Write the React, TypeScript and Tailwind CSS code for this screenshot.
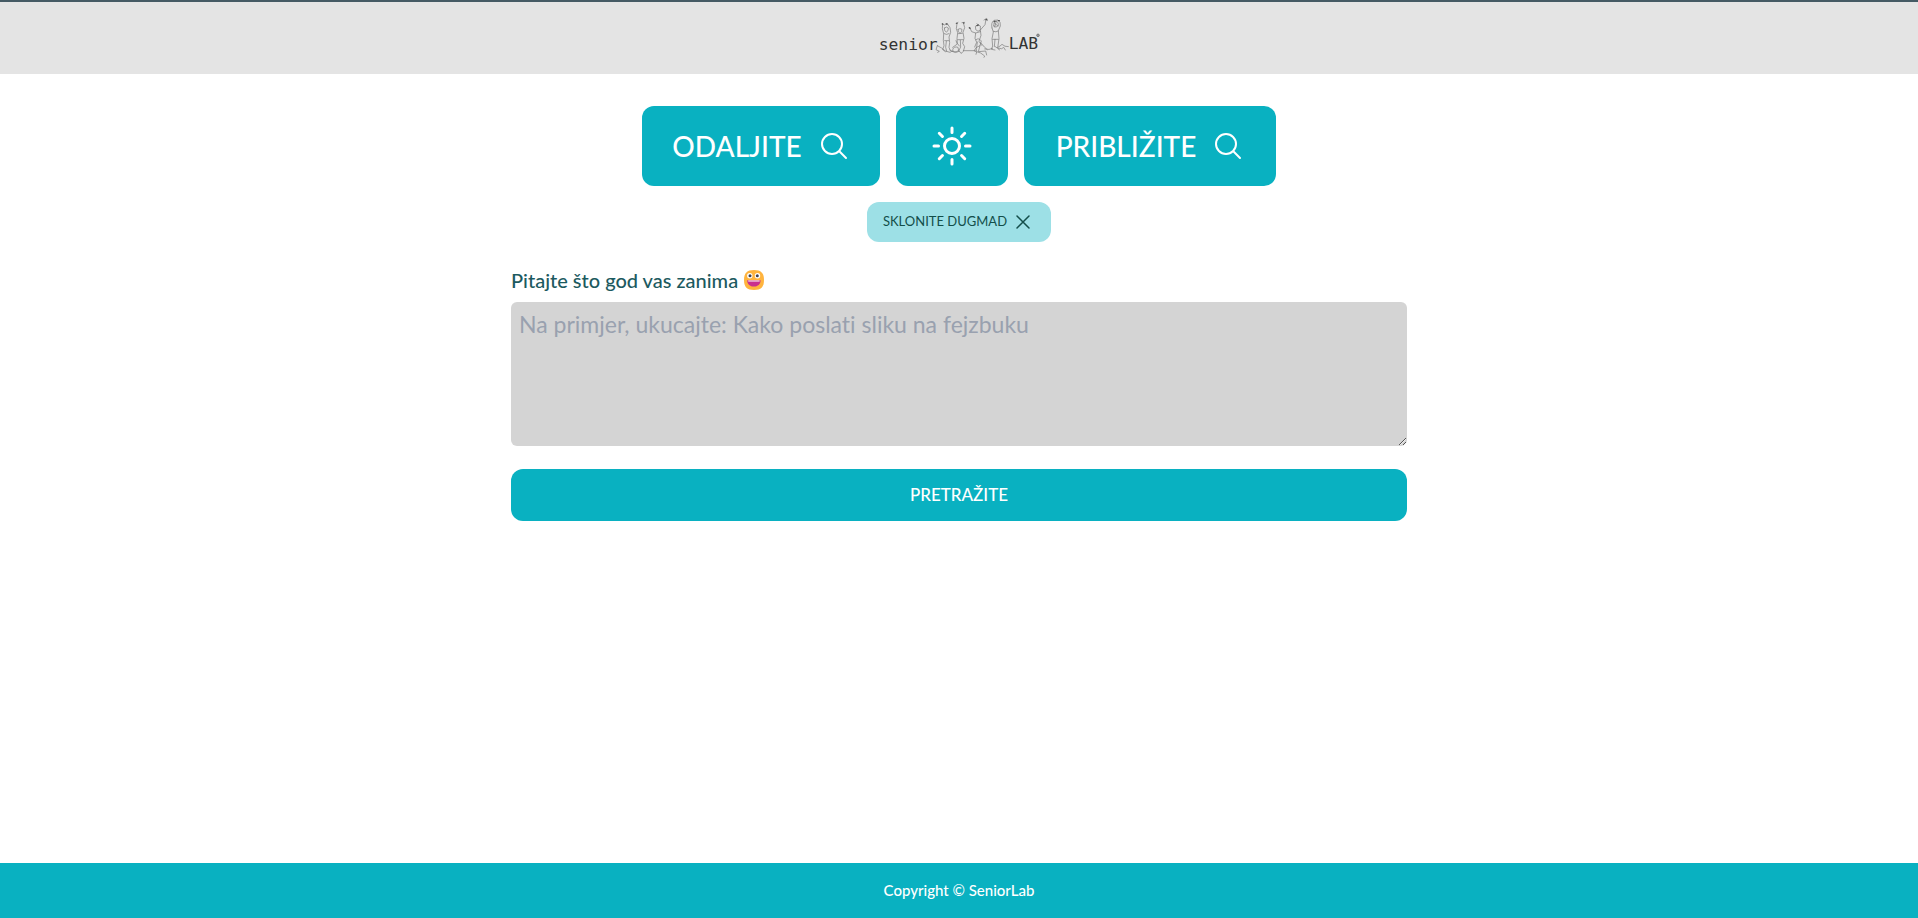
import type { ReactNode } from "react";
import {
  HiOutlineMagnifyingGlass,
  HiOutlineSun,
  HiOutlineXMark,
} from "react-icons/hi2";

function Logo() {
  return (
    <svg viewBox="21 45 492 138" className="h-[46px] w-[164px]" role="img" aria-label="seniorLAB">
      <g fill="#333333" fontFamily="'DejaVu Sans Mono', monospace" fontSize="49">
        <text x="26" y="149">senior</text>
        <text x="416" y="148">LAB</text>
      </g>
      <g fill="none" stroke="#777777" strokeWidth="2" strokeLinecap="round" strokeLinejoin="round">
        <path d="M202 137l-4 12 10 5-5 3M202 137q14 6 24 16l14 4 10-6" />
        <path d="M218 72l-1 14 4 15-1 20 2 16-4 12 8 6M232 71l8 12 2 14-5 14 2 17-2 14 4 10M218 72l5 3 6-4 4 4M222 101q8 5 15 0M223 84q7-6 12 0 1 10-6 12-7-2-6-12M224 122h12M229 124l-2 18 3 12" />
        <path d="M240 150q12 10 26 2l-2-10q-12-4-16 6M248 142l14-10-4-10" />
        <path d="M261 70l-2 16 4 12-2 18 1 14 6 8M280 68l4 15-5 14 3 18-4 15 6 10-4 14-6 6M264 88q6-5 12 0 0 9-6 12-6-3-6-12M265 101l12-1M263 119h16M271 121l1 20-6 12 8 6M258 70l6-3M276 68l7-1" />
        <path d="M280 152h36M246 154q10 8 22 0" />
        <path d="M299 82l6 13 12 4-2 16 5 12-6 14M348 58l-3 16-14 16 2 16-6 18 8 12M317 78q8-8 14 0v12q-7 8-13 0zM317 99l14-4M318 119q8-7 16 4l-4 14-12 6 2 12 12 4 12 9-2 4M322 126l-2 16-8 10 8 4-2 7M330 137l-5 18 22-2 3 12M332 128l12 14 8 7M325 76l-4-5M342 60l8-5 2 7" />
        <path d="M366 84q-4-16 6-23l12-1q9 6 7 18l-6 14 2 24-4 28 6 6M366 84l4 12-4 20 2 22-4 10 11 2M371 78q-1-12 7-15 9 3 7 14-7 9-14 1M370 94q8 4 15-1M368 118h17M375 118l-2 22M372 68l12 10M376 140l10 7M379 64l-5 17" />
        <path d="M344 147q14 4 24-2M384 142q7-4 12-9 8 8 19 7M388 145q8 4 13-3l5 8" />
      </g>
      <g fill="none" stroke="#555555" strokeWidth="4" strokeLinecap="round">
        <path d="M217 72h1M229 72h2M260 70h1M281 69h1M298 83l2 2M348 59h2M372 64h3M385 62h3M321 77l4-2" />
      </g>
      <circle cx="504" cy="106" r="4" fill="#999999" stroke="#666666" strokeWidth="2" />
    </svg>
  );
}

function Grin() {
  return (
    <svg viewBox="0 0 20 20" className="h-5 w-5" aria-hidden="true">
      <path d="M10 0C17 0 20 3 20 10S17 20 10 20 0 17 0 10 3 0 10 0Z" fill="#ffb43e" />
      <circle cx="5.8" cy="5.800" r="2.700" fill="#ffffff" />
      <circle cx="13.500" cy="5.800" r="2.700" fill="#ffffff" />
      <circle cx="6" cy="5.800" r="1.500" fill="#40404f" />
      <circle cx="13.300" cy="5.800" r="1.500" fill="#40404f" />
      <path d="M3.200 10.300h13.400c0 4-2.800 6.300-6.700 6.300s-6.700-2.300-6.700-6.300Z" fill="#c9308e" />
      <path d="M4.200 10.500h11.400v1H4.200Z" fill="#ffffff" />
    </svg>
  );
}

function BigButton({
  children,
  label,
  width,
}: {
  children: ReactNode;
  label?: string;
  width: string;
}) {
  return (
    <button
      type="button"
      aria-label={label}
      className={`flex h-20 items-center justify-center gap-4 rounded-xl bg-[#09b1c1] text-[28px] font-medium text-white ${width}`}
    >
      {children}
    </button>
  );
}

export default function App() {
  return (
    <div className="flex min-h-screen flex-col bg-white font-['Lato',sans-serif] [font-variant-ligatures:none]">
      <header className="flex justify-center border-t-2 border-[#455a64] bg-[#e4e4e4] py-[13px]">
        <a href="#">
          <Logo />
        </a>
      </header>

      <main className="mx-auto flex w-full max-w-4xl grow flex-col pt-8">
        <div className="flex justify-center gap-4">
          <BigButton width="w-[238px]">
            ODALJITE
            <HiOutlineMagnifyingGlass className="h-8 w-8" />
          </BigButton>
          <BigButton label="Promijenite temu" width="w-28">
            <HiOutlineSun className="h-12 w-12" />
          </BigButton>
          <BigButton width="w-[252px]">
            PRIBLIŽITE
            <HiOutlineMagnifyingGlass className="h-8 w-8" />
          </BigButton>
        </div>

        <button
          type="button"
          className="mt-4 flex h-10 items-center gap-1 self-center rounded-xl bg-[#9de0e6] px-4 text-[13px] text-[#134e4a]"
        >
          SKLONITE DUGMAD
          <HiOutlineXMark className="h-6 w-6" />
        </button>

        <form className="mt-6 flex flex-col">
          <label
            htmlFor="question"
            className="flex items-center gap-1.5 text-xl font-medium text-[#1c5a60]"
          >
            Pitajte što god vas zanima
            <Grin />
          </label>
          <textarea
            id="question"
            placeholder="Na primjer, ukucajte: Kako poslati sliku na fejzbuku"
            className="mt-2 h-36 w-full resize rounded-md bg-[#d4d4d4] px-2 py-1.5 text-[23px] leading-8 text-gray-700 placeholder:text-gray-400"
          />
          <button
            type="button"
            className="mt-[23px] h-[52px] rounded-xl bg-[#09b1c1] text-[17px] font-medium text-white"
          >
            PRETRAŽITE
          </button>
        </form>
      </main>

      <footer className="flex h-[55px] items-center justify-center bg-[#09b1c1] text-[15px] font-medium text-white">
        Copyright © SeniorLab
      </footer>
    </div>
  );
}
